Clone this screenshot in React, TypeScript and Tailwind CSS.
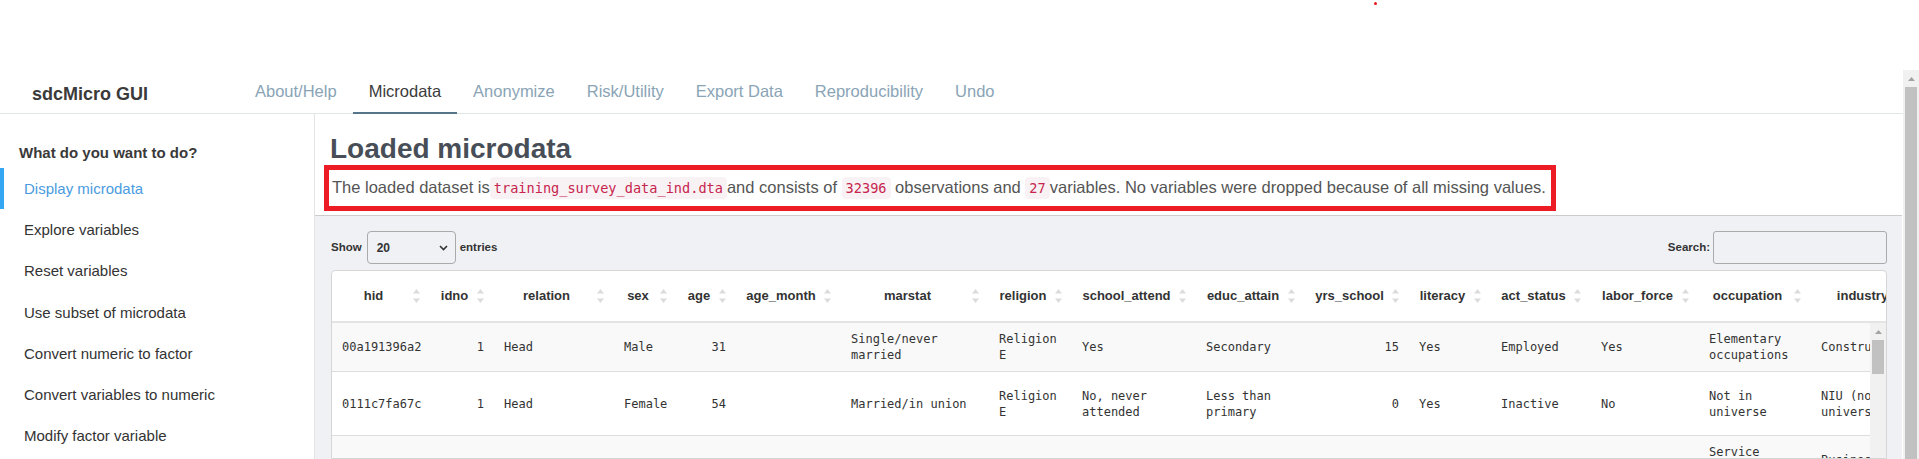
import React from "react";

type Col = { key: string; w: string; num?: boolean };

const cols: Col[] = [
  { key: "hid", w: "w-[98px]" },
  { key: "idno", w: "w-[64px]", num: true },
  { key: "relation", w: "w-[120px]" },
  { key: "sex", w: "w-[63px]" },
  { key: "age", w: "w-[59px]", num: true },
  { key: "age_month", w: "w-[105px]" },
  { key: "marstat", w: "w-[148px]" },
  { key: "religion", w: "w-[83px]" },
  { key: "school_attend", w: "w-[124px]" },
  { key: "educ_attain", w: "w-[109px]" },
  { key: "yrs_school", w: "w-[104px]", num: true },
  { key: "literacy", w: "w-[82px]" },
  { key: "act_status", w: "w-[100px]" },
  { key: "labor_force", w: "w-[108px]" },
  { key: "occupation", w: "w-[112px]" },
  { key: "industry", w: "w-[118px]" },
];

const rows: { h: string; bg: string; cells: string[] }[] = [
  {
    h: "h-[48px]",
    bg: "bg-[#f9f9f9]",
    cells: ["00a191396a2", "1", "Head", "Male", "31", "", "Single/never married", "Religion E", "Yes", "Secondary", "15", "Yes", "Employed", "Yes", "Elementary occupations", "Construction"],
  },
  {
    h: "h-[64px]",
    bg: "bg-white",
    cells: ["0111c7fa67c", "1", "Head", "Female", "54", "", "Married/in union", "Religion E", "No, never attended", "Less than primary", "0", "Yes", "Inactive", "No", "Not in universe", "NIU (not in universe)"],
  },
  {
    h: "h-[64px]",
    bg: "bg-[#f9f9f9]",
    cells: ["0128a32b7e4", "1", "Head", "Male", "42", "", "Widowed", "Other", "Yes", "Primary", "6", "Yes", "Employed", "Yes", "Service workers and shop sales", "Business services"],
  },
];

const tabs = ["About/Help", "Microdata", "Anonymize", "Risk/Utility", "Export Data", "Reproducibility", "Undo"];

const menu = [
  "Display microdata",
  "Explore variables",
  "Reset variables",
  "Use subset of microdata",
  "Convert numeric to factor",
  "Convert variables to numeric",
  "Modify factor variable",
];

const SortIcon = () => (
  <svg width="7" height="14" viewBox="0 0 7 14" className="absolute right-[10px] top-1/2 -translate-y-1/2">
    <path d="M3.5 0 L7 4.5 L0 4.5 Z" fill="#dcdcdc" />
    <path d="M0 9.5 L7 9.5 L3.5 14 Z" fill="#dcdcdc" />
  </svg>
);

const UpArrow = () => (
  <svg width="7" height="4" viewBox="0 0 7 4">
    <path d="M3.5 0 L7 4 L0 4 Z" fill="#a3a3a3" />
  </svg>
);

const Code = ({ children }: { children: React.ReactNode }) => (
  <code className="rounded-[4px] bg-[#f9f2f4] px-1 py-[3px] font-['DejaVu_Sans_Mono',monospace] text-[13.6px] text-[#c7254e]">
    {children}
  </code>
);

const Colgroup = () => (
  <colgroup>
    {cols.map((c) => (
      <col key={c.key} className={c.w} />
    ))}
  </colgroup>
);

export default function App() {
  return (
    <div className="relative h-[459px] w-[1919px] overflow-hidden bg-white font-['Liberation_Sans',Arial,sans-serif] text-[#333]">
      <div className="relative h-[70px]">
        <div className="absolute left-[1374px] top-[2px] h-[3px] w-[3px] rounded-full bg-[#e8141c]" />
      </div>

      <div className="flex h-[389px]">
        <div className="flex min-w-0 flex-1 flex-col">
          {/* navbar */}
          <nav className="flex h-[44px] shrink-0 items-start border-b border-[#dee6e8]">
            <div className="w-[239px] pl-[32px] pt-[14px] text-[18px] font-bold leading-[21px] text-[#3a3a3a]">
              sdcMicro GUI
            </div>
            <div className="flex">
              {tabs.map((t) => (
                <div
                  key={t}
                  className={
                    t === "Microdata"
                      ? "h-[44px] border-b-2 border-[#56758a] px-4 pt-[12px] text-[16.5px] leading-[19px] text-[#3b3b3b]"
                      : "h-[44px] px-4 pt-[12px] text-[16.5px] leading-[19px] text-[#8aa4b6]"
                  }
                >
                  {t}
                </div>
              ))}
            </div>
          </nav>

          <div className="flex min-h-0 flex-1">
            {/* sidebar */}
            <aside className="w-[315px] shrink-0 border-r border-[#e3e3e3] bg-white pt-[30px]">
              <div className="mb-[6px] pl-[19px] text-[15px] font-bold leading-[18px] text-[#3a3a3a]">
                What do you want to do?
              </div>
              {menu.map((m, i) => (
                <div
                  key={m}
                  className={
                    i === 0
                      ? "flex h-[41.3px] items-center border-l-4 border-[#35a6f2] pl-[20px] text-[15px] leading-[18px] text-[#4a9be0]"
                      : "flex h-[41.3px] items-center pl-[24px] text-[15px] leading-[18px] text-[#333]"
                  }
                >
                  {m}
                </div>
              ))}
            </aside>

            {/* main */}
            <main className="flex min-w-0 flex-1 flex-col">
              <div className="pl-[15px]">
                <h2 className="mt-[19px] text-[28px] font-bold leading-[32px] text-[#474e57]">Loaded microdata</h2>
              </div>
              <div className="pl-[9px]">
                <div className="w-[1232px] whitespace-nowrap border-[5px] border-[#ed1c24] py-[5px] pl-[3px] text-[16.5px] leading-[25px] text-[#555]">
                  The loaded dataset is<Code>training_survey_data_ind.dta</Code>and consists of <Code>32396</Code> observations and <Code>27</Code>variables. No variables were dropped because of all missing values.
                </div>
              </div>

              <div className="mr-[1px] mt-[4px] flex min-h-0 flex-1 flex-col border-t border-[#cccccc] bg-[#f0f1f5] pl-[16px] pr-[15px] pt-[15px]">
                <div className="flex h-[33px] shrink-0 items-center justify-between">
                  <div className="flex items-center text-[11.5px] font-bold">
                    <span>Show</span>
                    <div className="ml-[5px] flex h-[33px] w-[89px] items-center justify-between rounded-[4px] border border-[#aaaaaa] pl-[9px] pr-[7px] text-[12px]">
                      <span>20</span>
                      <svg width="9" height="6" viewBox="0 0 9 6">
                        <path d="M1 1 L4.5 4.5 L8 1" fill="none" stroke="#333" strokeWidth="1.6" />
                      </svg>
                    </div>
                    <span className="ml-[4px]">entries</span>
                  </div>
                  <div className="flex items-center text-[11.5px] font-bold">
                    <span>Search:</span>
                    <div className="ml-[3px] h-[33px] w-[174px] rounded-[3px] border border-[#aaaaaa]" />
                  </div>
                </div>

                <div className="mt-[6px] flex min-h-0 flex-1 flex-col overflow-hidden rounded-t-[4px] border border-[#d6d6d6] bg-white">
                  <div className="shrink-0 overflow-hidden border-b-2 border-[#e4e4e4]">
                    <table className="w-[1597px] table-fixed border-collapse">
                      <Colgroup />
                      <thead>
                        <tr className="h-[50px]">
                          {cols.map((c) => (
                            <th
                              key={c.key}
                              className="relative whitespace-nowrap pl-[10px] pr-[25px] text-center align-middle text-[13px] font-bold text-[#333]"
                            >
                              {c.key}
                              <SortIcon />
                            </th>
                          ))}
                        </tr>
                      </thead>
                    </table>
                  </div>

                  <div className="flex min-h-0 flex-1">
                    <div className="min-w-0 flex-1 overflow-hidden">
                      <table className="w-[1597px] table-fixed border-collapse font-['DejaVu_Sans_Mono',monospace] text-[12px] leading-[16px] text-[#333]">
                        <Colgroup />
                        <tbody>
                          {rows.map((r, ri) => (
                            <tr key={ri} className={`${r.h} ${r.bg} border-b border-[#dddddd]`}>
                              {r.cells.map((v, ci) => (
                                <td
                                  key={ci}
                                  className={
                                    cols[ci].num
                                      ? "px-[10px] py-[8px] text-right align-middle"
                                      : "px-[10px] py-[8px] text-left align-middle"
                                  }
                                >
                                  {v}
                                </td>
                              ))}
                            </tr>
                          ))}
                        </tbody>
                      </table>
                    </div>
                    <div className="flex w-[16px] shrink-0 flex-col bg-[#f1f1f1] px-[2px]">
                      <div className="flex h-[17px] items-center justify-center">
                        <UpArrow />
                      </div>
                      <div className="h-[34px] bg-[#c1c1c1]" />
                    </div>
                  </div>
                </div>
              </div>
            </main>
          </div>
        </div>

        {/* page scrollbar */}
        <div className="flex w-[16px] shrink-0 flex-col bg-[#f1f1f1] px-[2px]">
          <div className="flex h-[17px] items-center justify-center">
            <UpArrow />
          </div>
          <div className="flex-1 bg-[#c1c1c1]" />
        </div>
      </div>
    </div>
  );
}
